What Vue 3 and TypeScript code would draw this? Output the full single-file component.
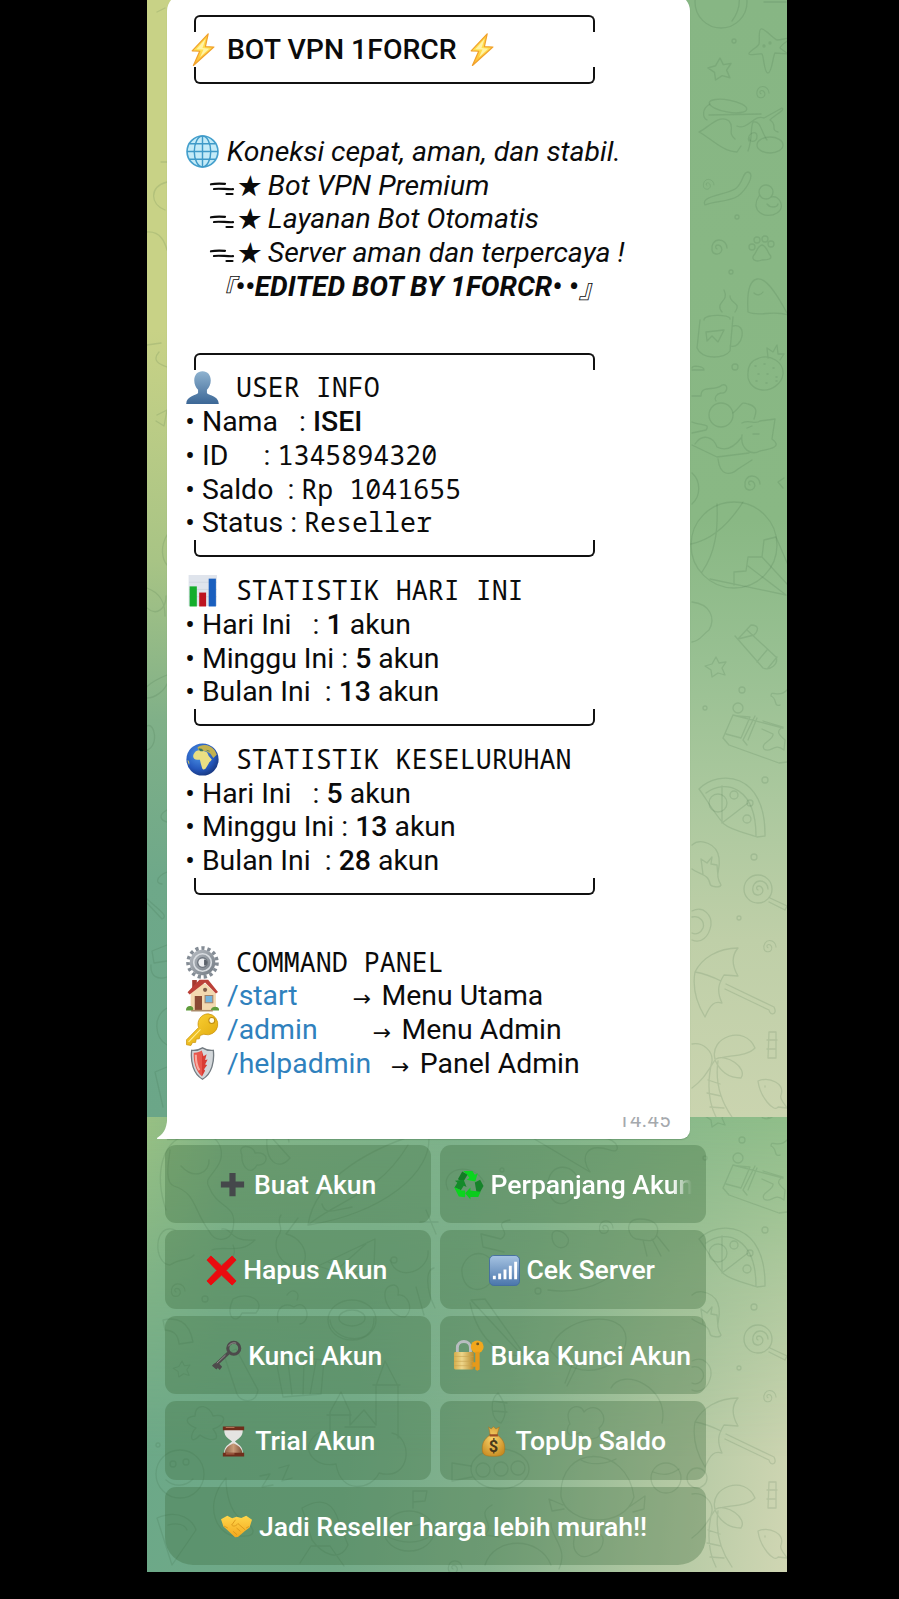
<script setup lang="ts">
type Kind = 'text' | 'bold' | 'italic' | 'bolditalic' | 'mono' | 'link' | 'icon' | 'arrow' | 'dash' | 'star' | 'open' | 'close'
interface Run { k: Kind; v: string }
interface Row { frame?: 'top' | 'bottom'; runs?: Run[] }

const r = (k: Kind, v = ''): Run => ({ k, v })
const heading = (icon: string, label: string): Row => ({ runs: [r('icon', icon), r('mono', ' ' + label)] })
const stat = (label: string, count: string): Row => ({ runs: [r('text', '• ' + label), r('bold', count), r('text', ' akun')] })
const feature = (label: string): Row => ({ runs: [r('dash'), r('star', '★'), r('italic', label)] })
const command = (icon: string, cmd: string, gap: string, label: string): Row => ({
  runs: [r('icon', icon), r('text', ' '), r('link', cmd), r('text', gap), r('arrow', '→'), r('text', ' ' + label)],
})

const rows: Row[] = [
  { frame: 'top' },
  { runs: [r('icon', 'bolt'), r('bold', ' BOT VPN 1FORCR '), r('icon', 'bolt')] },
  { frame: 'bottom' },
  {},
  { runs: [r('icon', 'globe'), r('italic', ' Koneksi cepat, aman, dan stabil.')] },
  feature('Bot VPN Premium'),
  feature('Layanan Bot Otomatis'),
  feature('Server aman dan terpercaya !'),
  { runs: [r('open', '『'), r('bolditalic', '••EDITED BOT BY 1FORCR• •'), r('close', '』')] },
  {},
  { frame: 'top' },
  heading('user', 'USER INFO'),
  { runs: [r('text', '• Nama   : '), r('bold', 'ISEI')] },
  { runs: [r('text', '• ID     : '), r('mono', '1345894320')] },
  { runs: [r('text', '• Saldo  : '), r('mono', 'Rp 1041655')] },
  { runs: [r('text', '• Status : '), r('mono', 'Reseller')] },
  { frame: 'bottom' },
  heading('chart', 'STATISTIK HARI INI'),
  stat('Hari Ini   : ', '1'),
  stat('Minggu Ini : ', '5'),
  stat('Bulan Ini  : ', '13'),
  { frame: 'bottom' },
  heading('earth', 'STATISTIK KESELURUHAN'),
  stat('Hari Ini   : ', '5'),
  stat('Minggu Ini : ', '13'),
  stat('Bulan Ini  : ', '28'),
  { frame: 'bottom' },
  {},
  heading('gear', 'COMMAND PANEL'),
  command('house', '/start', '        ', 'Menu Utama'),
  command('key', '/admin', '        ', 'Menu Admin'),
  command('shield', '/helpadmin', '   ', 'Panel Admin'),
]

const buttons = [
  { icon: 'plus', label: 'Buat Akun' },
  { icon: 'recycle', label: 'Perpanjang Akun', fade: true },
  { icon: 'cross', label: 'Hapus Akun' },
  { icon: 'signal', label: 'Cek Server' },
  { icon: 'oldkey', label: 'Kunci Akun' },
  { icon: 'lock', label: 'Buka Kunci Akun' },
  { icon: 'hourglass', label: 'Trial Akun' },
  { icon: 'money', label: 'TopUp Saldo' },
  { icon: 'hands', label: 'Jadi Reseller harga lebih murah!!', wide: true },
]
</script>

<template>
  <div class="screen">
    <svg class="defs" width="0" height="0" aria-hidden="true">
      <defs>
        <linearGradient id="gBolt" x1="0" y1="0" x2="0" y2="1"><stop offset="0" stop-color="#ffcf3f" /><stop offset=".5" stop-color="#ffe14f" /><stop offset="1" stop-color="#ffb52e" /></linearGradient>
        <linearGradient id="gUser" x1="0" y1="0" x2="0" y2="1"><stop offset="0" stop-color="#8fb3d0" /><stop offset="1" stop-color="#3c6796" /></linearGradient>
        <radialGradient id="gEarth" cx=".4" cy=".35" r=".7"><stop offset="0" stop-color="#4e97e8" /><stop offset=".65" stop-color="#2558bd" /><stop offset="1" stop-color="#17357c" /></radialGradient>
        <linearGradient id="gGear" x1="0" y1="0" x2="1" y2="1"><stop offset="0" stop-color="#b9bec4" /><stop offset="1" stop-color="#717982" /></linearGradient>
        <linearGradient id="gKey" x1="0" y1="0" x2="1" y2="1"><stop offset="0" stop-color="#ffd83c" /><stop offset="1" stop-color="#dca307" /></linearGradient>
        <linearGradient id="gSig" x1="0" y1="0" x2="0" y2="1"><stop offset="0" stop-color="#a6c3e2" /><stop offset="1" stop-color="#4a76ab" /></linearGradient>
        <linearGradient id="gLock" x1="0" y1="0" x2="1" y2="0"><stop offset="0" stop-color="#d5ad4b" /><stop offset=".4" stop-color="#eed68a" /><stop offset="1" stop-color="#b98b2e" /></linearGradient>
        <linearGradient id="gHand" x1="0" y1="0" x2="0" y2="1"><stop offset="0" stop-color="#ffd64a" /><stop offset="1" stop-color="#f3a81f" /></linearGradient>
        <radialGradient id="gBag" cx=".45" cy=".4" r=".65"><stop offset="0" stop-color="#f9d36b" /><stop offset="1" stop-color="#c98d23" /></radialGradient>
        <linearGradient id="gSand" x1="0" y1="0" x2="1" y2="0"><stop offset="0" stop-color="#8c6046" /><stop offset=".5" stop-color="#c89a78" /><stop offset="1" stop-color="#7d4e35" /></linearGradient>

        <symbol id="i-bolt" viewBox="0 0 32 32"><path d="M21.5 .8 6 17.3l7.3.4L7.2 31.5 27 13.6l-8.2-.5z" fill="url(#gBolt)" stroke="#f1a12c" stroke-width="1.2" stroke-linejoin="round" /><path d="M19 5.5 10 15.8l7 .2-3.4 7.6 8.8-8.4-6.4-.6z" fill="#fff3a6" /></symbol>
        <symbol id="i-globe" viewBox="0 0 32 32"><circle cx="16" cy="16" r="15" fill="#c4ebf8" stroke="#45a0cd" stroke-width="1.6" /><path d="M1 16h30M16 1v30M3.5 8.5h25M3.5 23.5h25" fill="none" stroke="#3f9ac8" stroke-width="1.4" /><ellipse cx="16" cy="16" rx="8" ry="15" fill="none" stroke="#3f9ac8" stroke-width="1.4" /></symbol>
        <symbol id="i-user" viewBox="0 0 32 32"><path d="M16 .3c5 0 8 3.7 8 8.8 0 4-1.600 6.700-3.700 9v3.200c1.200 2.500 11.300 2.300 11.500 10.600H.2C.4 23.600 10.500 23.800 11.700 21.300v-3.200C9.600 15.800 8 13.100 8 9.100 8 4 11 .3 16 .3z" fill="url(#gUser)" /></symbol>
        <symbol id="i-chart" viewBox="0 0 32 32"><path d="M2.500 1H30v30H2.500z" fill="#dfe4ec" /><path d="M3 8h27M3 15h27M3 22h27" stroke="#cfd6e0" stroke-width=".8" /><path d="M3.500 12h7v19.500h-7z" fill="#14ad2c" /><path d="M12.800 18h6.700v13.500h-6.700z" fill="#bd1420" /><path d="M22 4.500h7v27h-7z" fill="#1a5fbe" /></symbol>
        <symbol id="i-earth" viewBox="0 0 32 32"><circle cx="16" cy="16" r="15.600" fill="url(#gEarth)" /><path d="M8 10c1-2.500 4-3.500 6.500-2.800 2 .8 4.500.5 6 2l1.500 3.500 3 3.200c-.6 1.700-2.500 2-3 4l-2.500 4.200c-1 2-3.500 2.300-4-.1l-1.300-4.500-.7-3.200c-2.500.2-5.500-.2-6.300-2.300C6.600 12.300 7.300 11 8 10z" fill="#e9df83" /><path d="M11 4.500c2-2.300 8-3.300 11.500-1.600 3.500 1.500 6.500 5 7.300 8.600l-3.300 3-2.800-4-3.500-2.200-4-.8-3.700-.5z" fill="#c2b14f" /><path d="M12.500 5.500l3 .5 1 1.600-2.600.1zM20 7l3 1" fill="#2c7a6d" stroke="#346d5d" stroke-width=".6" /><path d="M1.500 16.500c1.500.5 2 2.500 1.600 4.500-1-1.200-1.600-3-1.600-4.500z" fill="#cfc45f" /></symbol>
        <symbol id="i-gear" viewBox="0 0 32 32"><circle cx="16" cy="16" r="14" fill="none" stroke="#848c95" stroke-width="3.600" stroke-dasharray="3.100 2.760" /><circle cx="16" cy="16" r="12.400" fill="url(#gGear)" /><circle cx="16" cy="16" r="8.500" fill="none" stroke="#d9dde1" stroke-width="1.600" /><circle cx="16" cy="16" r="5.300" fill="#6d747d" /><circle cx="16" cy="16" r="4" fill="#eef0f2" /><path d="M17.500 13v6a3 3 0 0 0 0-6z" fill="#5b626b" /></symbol>
        <symbol id="i-house" viewBox="0 0 32 32"><path d="M6 1h4.500v9H6z" fill="#a53a30" /><path d="M4.500 14 15 4.500h4L29 14v16H4.500z" fill="#f3d9b0" /><path d="M13 .8h8.500L31 12.500l-2 1.500L18.500 3.500 3.500 15 1.500 12.800z" fill="#bb4038" /><path d="M8.500 16.500h7V30h-7z" fill="#8a4a34" /><path d="M18.500 16h7.500v7h-7.500z" fill="#74b4dc" stroke="#a2826a" /><circle cx="18.500" cy="10.500" r="2" fill="#7e5c49" /><path d="M0 30c0-4 5-5 7-2v2.500H0zM24 30c1-4 7-4 8-1v1.500h-8z" fill="#5f9c3b" /><path d="M5 30h21v1.500H5z" fill="#a98a68" /></symbol>
        <symbol id="i-key" viewBox="0 0 32 32"><path d="M21.500.8a10 10 0 0 0-9.300 13.300L.5 26v4.800l4.300.7 1.500-2.900 3-.1.600-3.200 3-.3.800-3.200 3.600-1.200A10.200 10.200 0 1 0 21.500.8z" fill="url(#gKey)" stroke="#c8920d" stroke-width=".7" /><circle cx="25" cy="7.200" r="2.900" fill="#fffbe5" stroke="#bd8b10" /><path d="M14 16 2.500 28" stroke="#fff09a" stroke-width="1" /></symbol>
        <symbol id="i-shield" viewBox="0 0 32 32"><path d="M16 .8c3 2 7 2.700 10.500 2.400C27.700 14 25.200 26 16 31.300 6.800 26 4.300 14 5.500 3.200 9 3.500 13 2.800 16 .8z" fill="#d3d7da" stroke="#727a80" stroke-width="1.300" /><path d="M15.500 3.500c-2 1.200-5.500 2.300-8 2C7 14 9.500 23.500 15.500 28.500z" fill="#e8574c" /><path d="m15.500 4 1.500 5 3-2-1.500 5.500 2.500-.5-2.500 5 2 .5-3 4 1 1.500-3 5.500z" fill="#d93c34" /><path d="M9.500 7.500c0 6 .7 11 3.500 15" stroke="#f8aca2" stroke-width="2" fill="none" /></symbol>
        <symbol id="i-plus" viewBox="0 0 32 32"><path d="M12.800 4h6.400v8.800H28v6.400h-8.800V28h-6.400v-8.800H4v-6.400h8.800z" fill="#45484b" /></symbol>
        <symbol id="i-recycle" viewBox="0 0 32 32"><path d="M10.500 2h9.500l2.500 4 3-1.500-2.500 8.500-9-1.800 3-1.800-2.500-3.500z" fill="#0bd51f" /><path d="m9.500 2.500 5.500 3.500-4.500 7.500-5.500-3z" fill="#137c25" /><path d="m22.500 14 5.500-3 3.500 6.500-3.500 6.300h-3.800z" fill="#16832a" /><path d="M28.500 23.500 26 29h-8v2.500l-5.500-6.500 5.500-6v3.200z" fill="#0bcb1d" /><path d="m2 12 9-1L14 18.500l-2.900-1.300-3 4.800-6.600-3 3-4.800z" fill="#158a2a" /><path d="m1 18.500 5 10 6.500.7v-7H9z" fill="#0bd51f" /></symbol>
        <symbol id="i-cross" viewBox="0 0 32 32"><path d="m5 1 11 10.300L27 1l4 4.200L20.700 16 31 26.800 27 31 16 20.700 5 31l-4-4.200L11.300 16 1 5.200z" fill="#ea0b0f" stroke="#ea0b0f" stroke-width="1" /></symbol>
        <symbol id="i-signal" viewBox="0 0 32 32"><rect x=".5" y=".5" width="31" height="31" rx="4.500" fill="url(#gSig)" stroke="#45709f" /><path d="M4 21.500h3v3.500H4zm5.500-2.500h3v6h-3zm5.500-4h3v10h-3zm5.500-4h3v14h-3zm5.500-4h3v18h-3z" fill="#fff" /></symbol>
        <symbol id="i-oldkey" viewBox="0 0 32 32"><path d="M18 13.500 3.500 27" stroke="#4d4a4b" stroke-width="3.400" /><path d="m7 23 4.500 4.500-2.500 3.500-2-2-1.500 1.500L1 26.500l2-2z" fill="#4d4a4b" /><circle cx="23.500" cy="8.500" r="6.200" fill="none" stroke="#4d4a4b" stroke-width="3.200" /><path d="M18 6.500a6.500 6.500 0 0 1 8-3.200M15 15.500 6 24" stroke="#96908f" stroke-width="1" fill="none" /></symbol>
        <symbol id="i-lock" viewBox="0 0 32 32"><path d="M4.500 15V8c0-8.500 13.500-8.500 13.500 0v7" fill="none" stroke="#b8bdc0" stroke-width="3" /><rect x="1" y="12.500" width="20.500" height="18" rx="1.500" fill="url(#gLock)" /><path d="M1 17h20M1 22h20M1 26.500h20" stroke="#c8a350" stroke-width=".6" /><circle cx="25" cy="7" r="6.600" fill="#f2a71c" /><path d="M23 12h4.500v18.500l-2.500 1.300-2-1.300v-3h-3v-4.500h3z" fill="#e6991a" /><circle cx="25.500" cy="4" r="1.500" fill="#715a25" /></symbol>
        <symbol id="i-hourglass" viewBox="0 0 32 32"><path d="M6.500 4h19c.5 7-5 9-8 12 3 3 8.500 5 8 12h-19c-.5-7 5-9 8-12-3-3-8.500-5-8-12z" fill="#e5e4e2" /><path d="M7 28c-.2-5 4.500-8.500 8.500-10h1c4 1.500 8.500 5 8.500 10z" fill="url(#gSand)" /><path d="M5 .5h22v4H5zM5 27.500h22v4H5z" fill="#6f2d1b" /><path d="M8 1.500h9M8 28.800h9" stroke="#b87558" /></symbol>
        <symbol id="i-money" viewBox="0 0 32 32"><path d="M11 1l2.500 2L16 .8 18.500 3 22 1l-2.300 8.200C26 13.500 28 18 27.500 25c-.3 5-3.500 6.300-11.500 6.300S4.800 30 4.500 25C4 18 6 13.500 12.600 9.200z" fill="url(#gBag)" stroke="#ad741d" stroke-width=".6" /><path d="M12 8.500h8.500v2.300H12z" fill="#9b4e24" /><text x="16" y="27" text-anchor="middle" font-family="Roboto, sans-serif" font-size="17" font-weight="700" fill="#49381a">$</text></symbol>
        <symbol id="i-hands" viewBox="0 0 32 32"><path d="M0 8.500 6.500 5l5 2.500L16 6l5 1.300L26 5l6 4-2.500 8-4.500 3.500-7.500 6.300-3 .2-8-7.500L2.500 16z" fill="url(#gHand)" /><path d="m15 9-4 5.500c2 2 4.500 1 6.500-1.500L25 19.500M20 21l-4-3.500M16.500 24.500 12.500 21M3 15.500l4 2M29 16l-3 1.500" fill="none" stroke="#dc9a1c" stroke-width="1" stroke-linejoin="round" /></symbol>

        <symbol id="d-spiral" viewBox="-10 -10 20 20" overflow="visible"><path d="M0 1c-2-1-2-4 1-4s5 4 3 7-8 3-9-2 2-10 7-10 8 4 8 8" /></symbol>
        <symbol id="d-star" viewBox="-10 -10 20 20" overflow="visible"><path d="M0-10 3-4l7-1-4 6 3 7-7-2-6 4-1-7-6-4 7-2z" /></symbol>

        <g id="strip">
          <circle cx="721" cy="2" r="26" /><path d="M738-10c3 12 1 22-6 31M764 2l22 0" />
          <path d="M761 29c2-2 13 10 16 11 5 0 12-3 12-1s-8 5-9 9l8 6-13-1c-2 2-3 20-7 20s-4-16-6-19c-4-1-12 2-13 0s9-7 10-10-1-14 2-15z" />
          <circle cx="764" cy="46" r="1" /><circle cx="770" cy="43" r="1" />
          <use href="#d-star" x="709" y="58" width="22" height="22" /><use href="#d-spiral" x="753" y="85" width="16" height="16" />
          <ellipse cx="728" cy="106" rx="19" ry="6" transform="rotate(10 728 106)" /><path d="M710 104c-9 5-7 14-3 16m2-5 52-1M699 132c8-3 20-19 30-11 6 6-2 12 6 18M699 132c10 5 24 20 38 20l4-6M748 151c5-14 2-22 5-29 8-2 8 10 14 18m-30-14c10 5 17-12 27-8l18-10c4 2-9 8-12 12 8 5 0 10 8 12" /><ellipse cx="770" cy="145" rx="13" ry="8" /><path d="M749 141c-3-7 8-12 8-5s-8 7-8 1" />
          <path d="M705 205c-5-9 20-10 30-16 9-6 7-17 13-17 8 2-2 18-10 24-9 6-23 5-33 9z" />
          <use href="#d-spiral" x="700" y="178" width="14" height="14" /><use href="#d-spiral" x="707" y="238" width="20" height="20" />
          <circle cx="766" cy="192" r="7" /><path d="M759 196c-10 15 7 24 18 17 9-6 2-18-5-16m-5 7c3 4 10 4 11 0" />
          <path d="M762 245c-5 1-5 7-8 10s0 8 8 5c6 0 11-1 8-5-3-3-3-9-8-10z" /><circle cx="752" cy="247" r="3" /><circle cx="757" cy="240" r="3" /><circle cx="765" cy="239" r="3" /><circle cx="771" cy="244" r="3" />
          <path d="M748 312c-1-15 0-31 9-33s20 15 31 36c-15-5-30 2-40-3m6-19c3 3 7 2 9-1" />
          <path d="M722 312c-8-10 8-10 2-22m11 22c7-10-5-8-5-16M704 320c0-6 26-6 26-1" />
          <path d="M700 320l-3 28c5 12 28 11 33 3l3-34M733 326c15-4 10 24-3 20M706 332l18-2-6 12-6-6-5 5zM692 370h12c0-4-12-5-12-2" />
          <path d="M759 358c11-4 25 4 24 16-1 10-12 17-21 16s-15-8-14-17c0-8 4-13 11-15zm9 0-1-10 6 4 4-7 1 9 6 0-4 6" /><path d="M755 366h1m8-2h1m8 4h1m-16 6h1m8 0h1m8 3h1m-21 4h1m9 2h1m9-2h1" stroke-width="1.600" />
          <path d="M692 396h9c0-12 14-4 21-11 7-2 6 9-1 8-5 1-7 5-5 8" /><circle cx="721" cy="415" r="12" /><path d="M733 413c10-8 7-12 15-9 12 3 7 11 6 15M742 423c8-4 13 2 18-2l15-2-3 20c11 8-2 10-12 12-9 5-20-2-18-16m5-7 5-2m1 8h6M692 422c8 4 19 1 14 8l-14 3m3 11c8-12 19-6 22 3 10 5 18-1 24-9M692 445l25 12 32-4M718 459c2 17 12 17 20 10l14-9" />
          <use href="#d-spiral" x="740" y="474" width="20" height="20" /><path d="M784 478l-6 4 5 6M692 473c9 8 9 23 0 31" />
          <circle cx="734" cy="545" r="43" /><path d="M717 504c1 25-1 48-15 68M743 502c-14 22-32 38-52 42M734 585v-13l12-1 2-14h14l2-17 12-3 12 28m-26-8 26 28m-40-19 38 29-76-16" />
          <path d="M692 602c18 2 24 16 17 28-9 7-8 10-17 12" /><path d="M738 639l13-14c8 0 8 5 3 10zM735 636l28 32c7 3 16-4 13-11l-29-27M757 662l10-12m1 18 9-11" />
          <use href="#d-star" x="706" y="657" width="20" height="20" /><circle cx="742" cy="690" r="3" /><circle cx="705" cy="708" r="2" /><circle cx="738" cy="708" r="5" />
          <path d="M733 715l50 13M723 738l10-23M723 738l6 7 50 18 8-1M737 716l13 1-9 21-15-4m29-18-12 24 4 5m10-27-9 22m15-19 20 6c-9 5-2 9 2 13l-1 10c-10-8-13 4-20-1-4-6 10-9 9-15l-11-5M787 690c-8 9-16-1-16 6 7 3 2 11 9 9" />
          <path d="M699 789c20-20 67-17 66 47l-8 1c-6-3-25-6-33-13-8-8-19-27-25-35zm7 4c20-15 50-5 50 43M722 786v37l26-20" /><circle cx="718" cy="803" r="9" /><circle cx="734" cy="795" r="4" /><circle cx="747" cy="819" r="4" /><circle cx="750" cy="803" r="3" />
          <path d="M692 845c8-7 25-2 27 13 2 13-5 15 2 27-1 3-10 2-11-1-1-10-12-10-18-15m11 5-2-15 6 4 5-6-1 7 6 1 1 12" />
          <circle cx="758" cy="889" r="14" /><use href="#d-spiral" x="748" y="879" width="20" height="20" /><path d="M770 898l17 8-2 4-16-8" />
          <path d="M692 911c12-6 20 5 19 14-2 12-10 19-19 15m0-23c8-2 13 5 11 11-2 5-7 7-11 5" /><use href="#d-spiral" x="760" y="939" width="16" height="16" />
          <path d="M695 972c7-14 23-24 43-24-6 7-7 16 0 28l-14-1c-5 8-8 15-2 28-7-2-11 0-17 14-8-13-13-28-10-45zm0 0c12 2 20 6 26 9m5 3 48 23c4 8-4 9-5 3l-44-21" />
          <path d="M769 1032h7v26h-8zM767 1040h10m-10 9h9" />
          <path d="M715 1059c-6-22 30-35 40-11-8 9-28 7-39 11 10-6 32 9 25 19-14 0-22-9-26-18-8 12-11 19-23 28M692 1044c12-2 21 8 20 17-5 21-4 40 4 56M718 1061c-3 21 2 39 14 56M708 1080l12 4m-13 9 14 3m-11 11 14 1" />
          <path d="M758 1081c12-5 27 3 23 14-2 4 4 9 6 13l-9-1c-4 6-18-10-20-26zm7 5v1" />
          <circle cx="754" cy="857" r="3" /><circle cx="765" cy="780" r="3" /><circle cx="735" cy="367" r="3" /><circle cx="734" cy="41" r="2" /><circle cx="737" cy="217" r="2" /><circle cx="731" cy="272" r="2" /><circle cx="739" cy="918" r="2" />
        </g>
      </defs>
    </svg>

    <main class="chat">
      <div class="wall wall-top" />
      <div class="wall wall-bottom"><div class="tint" /></div>
      <svg class="doodles" viewBox="147 0 640 1572" aria-hidden="true">
        <clipPath id="upper"><path d="M147 0h640v1117H147z" /></clipPath>
        <clipPath id="lower"><path d="M147 1117h640v455H147z" /></clipPath>
        <g clip-path="url(#upper)">
          <use href="#strip" />
          <path d="M157 12l8-4M167 162h-6m6 20c-18 5-17 22-2 28M147 232c14-1 18 11 20 18M147 345l14-2m-2 9c-7 8-1 12 8 15M157 415l10-5-3 16-8-5M167 535c-7 12-5 24 0 30M147 588c14 5 18 15 18 28M147 608c10 9 19 0 19-12M167 675c-25 10-27 20-20 23 8 0 17-7 20-14M147 726c8-4 12 20 0 24M167 810c-9 5-7 10 0 12M167 872c-12 5-11 12-5 12M147 903l15 16c6-3 0-7-15-20M167 945l-15 6 2 12 13-2M151 965c-1 12 8 15 16 12M167 1008c-15 9-12 30 0 37M167 1067l-12 5 8 35" />
        </g>
        <g clip-path="url(#lower)">
          <use href="#strip" y="450" />
          <path d="M166 1210c-12-36-5-72 26-76 26-5 36 18 25 33-8 12-12 13-8 20 9 23 29 16 24 42-3 13-18 14-24 2-16-22-13-38-35-45-11-4-4-30-4-36M181 1166c14 15 29 6 28-6M175 1230c-22-8-22 34-5 35 12-8 18-3 24-10m28-26c10-2 6 13 33 11-15 15-30 5-43 10" /><path d="M233 1245c4 9-2 20-12 19" />
          <path d="M308 1225c7-48 66-79 120-94 9 42-50 84-120 94zm0 0c30-25 70-30 100-80M322 1204c3 12 13 6 30 3M242 1155c-6-12 12-10 13-2 15-2 14 13 2 12-7 13-16 0-15-10zM267 1138c-16-4-17-16-2-14 20-16 24 10 7 14l18 20c-12 14-25 3-23-20m22 4-6-28M281 1215c-6 8 5 12-4 23-6 20 17 36 27 25 5-13-5-26-18-29l12-16M318 1266l57-27-1 29-28 7zm10-4 12 5 28-25" />
          <ellipse cx="352" cy="1320" rx="24" ry="20" /><ellipse cx="352" cy="1318" rx="13" ry="8" /><path d="M330 1320c2 22 45 28 44-2M388 1287c-8 6 0 30 17 30 10-8 2-24-7-22 2-10-4-12-10-8zM416 1287l8 28m-34-55c8 24 40 10 38-9M420 1222h18m-12-12 10 24M434 1268c-9 2-8 22 1 40" />
          <path d="M233 1299c16-9 33 3 23 14h-14c-5 12-18 5-9-14zM278 1322c-3-16 8-20 16-15 12-10 19 14 6 17M287 1295c5-8 14-3 10 5M163 1320c13-3 26 0 30 22l-14 2c-1-10-5-13-14-14z" />
          <path d="M224 1355l12-6 22 41c-2 14-17 13-21 4zM275 1355l8 42 38-3 3-34zM288 1362l4 33m12-34-1 34m13-34-6 34M330 1434v-22l11-20 9 20v13l14-15 12 15v-39l9-25 13 25v52M327 1415h24m22-30h27M345 1427h30M320 1432c-24 14-6 37 16 32 5 32 36 25 43 9 33 9 34-36 13-40" />
          <circle cx="180" cy="1474" r="24" /><circle cx="173" cy="1464" r="3" /><circle cx="186" cy="1462" r="3" /><path d="M166 1480c9 8 20 6 27-1M195 1416c0-14 15-11 18 0 17-4 11 11 0 13 11 15-6 11-13 6-11 12-10-2-4-7-12-5-11-11-1-12z" />
          <path d="M157 1518c23-10 36 3 39 12l-24 35zM168 1525c10-3 17 0 19 5M226 1478c-25 28-8 61 14 58 22 2 12-12 0-18-10-7-14-25-14-40zM260 1476l10-2-8 13 11-2m6-17 10-3-7 16 10-3M312 1540l-10-32c22-13 32-3 37 14l9 23c-8 18-26 9-36-5zM300 1563l11-17h19l14 20" />
          <ellipse cx="409" cy="1531" rx="25" ry="20" /><path d="M389 1520c12 9 27 8 40 0m-44 15c17 10 34 9 47 0M413 1508v-17h14l-2 10-12 1" />
          <path d="M463 1120c15 15 25 10 23-3m40 17 64 38c-10-14-5-30 20-22 12 5 9-12-8-12M448 1190c-10-20 23-31 36-8m64 6c-2-29 32-26 31-1-11 23-27 21-31 1zM462 1268c8-25 38-15 32 10-12 20-34 12-32-10zM510 1220c-20 4 3 11-9 19l-20-5 2 13 21 5" />
          <path d="M552 1236c0-12 24-1 14 10-8 5-14-2-14-10zM640 1219c-18 0-11 19-4 20 10 1 18 5 21-5s-5-15-17-15zm3 21 4 16m5-17 9 17m-4-20 12 15M548 1290c27 4 51-4 67-17m-145 30c9 42 39 58 54 51l-39-55-14 1 49 53m30-3c10-35 75-42 76-12 1 28-45 50-76 12z" />
          <path d="M572 1365l-7 18m14-21-12 24M611 1388c12-22 59 0 51 35M498 1393c-9 7-7 28 3 30 8-11 3-22-3-30zm-5 8 14 2m-14 8 14 1M570 1424c-8-18 11-22 14-12 12-13 28 6 15 16 6 13-15 14-18 4-18 10-14-7-11-8z" />
          <ellipse cx="500" cy="1469" rx="29" ry="20" /><circle cx="483" cy="1470" r="7" /><circle cx="501" cy="1469" r="7" /><circle cx="518" cy="1468" r="7" /><path d="M471 1466l-19-3v18l20-4M561 1497c-3-54 66-54 73 0-10 33-67 28-73 0zm20-37c10 6 25 4 35-1m13 48 16-11-1 13-11 3M563 1505l-14-6 3 12 12-2" /><circle cx="666" cy="1478" r="15" /><path d="M653 1472c10 4 17 3 26-3M574 1539c0-16 13-13 18-4 17-7 12 17 2 18-15 10-22-3-20-14zM485 1565c9-29 55-29 66 0M492 1505c-18 10 5 18-7 30l14 2M559 1569c10-21-9-32-8-46" />
          <circle cx="697" cy="1478" r="10" /><circle cx="502" cy="1170" r="2" /><circle cx="394" cy="1260" r="3" /><circle cx="205" cy="1299" r="3" /><circle cx="538" cy="1291" r="3" /><circle cx="158" cy="1445" r="2" />
          <use href="#d-spiral" x="167" y="1282" width="18" height="18" /><use href="#d-star" x="174" y="1361" width="16" height="16" /><use href="#d-spiral" x="444" y="1559" width="18" height="18" /><use href="#d-spiral" x="595" y="1219" width="18" height="18" />
        </g>
      </svg>

      <div class="column">
        <article class="bubble">
          <div v-for="(row, i) in rows" :key="i" class="row">
            <div v-if="row.frame" class="frame" :class="row.frame" />
            <template v-for="(run, j) in row.runs" :key="j">
              <svg v-if="run.k === 'icon'" class="emoji"><use :href="'#i-' + run.v" /></svg>
              <svg v-else-if="run.k === 'dash'" class="dash" viewBox="0 0 53 34"><path d="M26 15.300c4.500-1 9-.8 14-.5M29 20c6-.9 12 .5 19 .2M41.500 25h6" /></svg>
              <span v-else :class="run.k">{{ run.v }}</span>
            </template>
          </div>
          <div class="stamp"><time>14.45</time></div>
          <svg class="tail" viewBox="0 0 11 24"><path d="M11 0v24H1c-1.500 0-1.500-1 0-1.800C8 18 10.300 11 10.300 0z" fill="#fff" /></svg>
        </article>

        <nav class="keyboard">
          <button v-for="b in buttons" :key="b.label" type="button" :class="{ wide: b.wide, fade: b.fade }">
            <svg class="glyph"><use :href="'#i-' + b.icon" /></svg><span class="label">{{ b.label }}</span>
          </button>
        </nav>
      </div>
    </main>
  </div>
</template>

<style>
body { background: #000; }
</style>

<style scoped>
.screen {
  width: 899px;
  height: 1599px;
  overflow: hidden;
  background: #000;
  font-family: Roboto, "Liberation Sans", sans-serif;
}
.defs { position: absolute; }
.chat {
  position: relative;
  width: 640px;
  height: 1572px;
  margin-left: 147px;
  overflow: hidden;
}
.wall { position: absolute; left: 0; right: 0; }
.wall-top {
  top: 0;
  height: 1117px;
  background:
    linear-gradient(#c8d286 0, #c8d286 330px, #a8c485 560px, #80b088 720px, #6ea889 880px, #6ba688 1117px) 0 0 / 40px 100% no-repeat,
    linear-gradient(#87b684 0, #89b884 520px, #98c092 660px, #abc89e 800px, #bfcfa8 940px, #cad4af 1117px);
}
.wall-bottom {
  top: 1117px;
  height: 455px;
  background: linear-gradient(97deg, #6ba888 0, #72aa88 35%, #86b38f 57%, #adc6a0 78%, #d0d6b3 100%);
}
.tint {
  height: 100%;
  background: linear-gradient(90deg, #98c083 0, #83b487 12%, #7db18a 50%, #8fbd89 100%);
  -webkit-mask-image: linear-gradient(#000 0, rgba(0, 0, 0, .45) 35%, transparent 75%);
  mask-image: linear-gradient(#000 0, rgba(0, 0, 0, .45) 35%, transparent 75%);
}
.doodles {
  position: absolute;
  inset: 0;
  width: 640px;
  height: 1572px;
  fill: none;
  stroke: rgba(50, 95, 55, .14);
  stroke-width: 1.3;
  stroke-linejoin: round;
  stroke-linecap: round;
}
.column { position: relative; padding-left: 17.500px; }
.bubble {
  position: relative;
  box-sizing: border-box;
  width: 523.500px;
  height: 1144.500px;
  margin: -6px 0 0 2px;
  padding: 5.700px 0 0 18.800px;
  border-radius: 17px 17px 9px 0;
  background: #fff;
  box-shadow: 0 1px 1px rgba(50, 100, 60, .3);
  color: #0b0b0b;
}
.row {
  display: flex;
  height: 33.790px;
  line-height: 33.790px;
  font-size: 28.400px;
  white-space: pre;
}
.frame {
  box-sizing: border-box;
  width: 401px;
  height: 17px;
  margin-left: 8.500px;
  border: 2px solid #111;
}
.frame.top { margin-top: 15.500px; border-bottom: 0; border-radius: 6px 6px 0 0; }
.frame.bottom { border-top: 0; border-radius: 0 0 6px 6px; }
.bold { font-weight: 500; }
.italic { font-style: italic; }
.bolditalic { font-style: italic; font-weight: 700; font-size: 28px; }
.mono { font-family: "Droid Sans Mono", "Noto Sans Mono", "DejaVu Sans Mono", monospace; font-size: 26.650px; }
.link { color: #2f81bd; }
.emoji { flex: none; width: 33px; height: 33px; margin: 0 .8px; }
.dash { width: 53px; height: 34px; fill: none; stroke: #0b0b0b; stroke-width: 2.200; stroke-linecap: round; }
.star { position: relative; top: 1px; width: 29.500px; font-family: "DejaVu Sans", sans-serif; font-size: 29px; text-indent: -1.500px; transform: skewX(-5deg); }
.arrow { position: relative; top: 3px; width: 25px; margin-left: -4.500px; font-family: "DejaVu Sans", sans-serif; font-size: 22px; text-align: center; }
.open, .close { font-family: "Noto Sans CJK JP", sans-serif; font-style: italic; font-size: 26px; }
.open { display: flex; justify-content: flex-end; width: 50px; }
.stamp {
  position: absolute;
  right: 19px;
  top: 1123px;
  height: 14px;
  overflow: hidden;
  color: #a5a9ad;
  font-size: 20px;
  line-height: 20px;
  letter-spacing: .5px;
}
.stamp time { display: block; margin-top: -7.500px; }
.tail { position: absolute; left: -10px; bottom: 0; width: 11px; height: 24px; }
.keyboard {
  display: grid;
  grid-template-columns: 266px 266px;
  grid-auto-rows: 78.400px;
  gap: 7.100px 9.500px;
  margin-top: 6.500px;
}
button {
  display: flex;
  align-items: center;
  justify-content: center;
  gap: 6.500px;
  min-width: 0;
  padding: 1px 13px 0 11px;
  border: 0;
  border-radius: 11px;
  overflow: hidden;
  background: rgba(57, 103, 57, .32);
  color: #fff;
  font: 500 26.550px/30px Roboto, "Liberation Sans", sans-serif;
  white-space: nowrap;
}
button.wide { grid-column: span 2; border-radius: 11px 11px 28px 28px; }
button.fade { justify-content: flex-start; padding-left: 13px; }
button.fade .label {
  width: 201px;
  overflow: hidden;
  -webkit-mask-image: linear-gradient(90deg, #000 90%, transparent 100%);
  mask-image: linear-gradient(90deg, #000 90%, transparent 100%);
}
.glyph { flex: none; width: 31px; height: 31px; }
</style>
